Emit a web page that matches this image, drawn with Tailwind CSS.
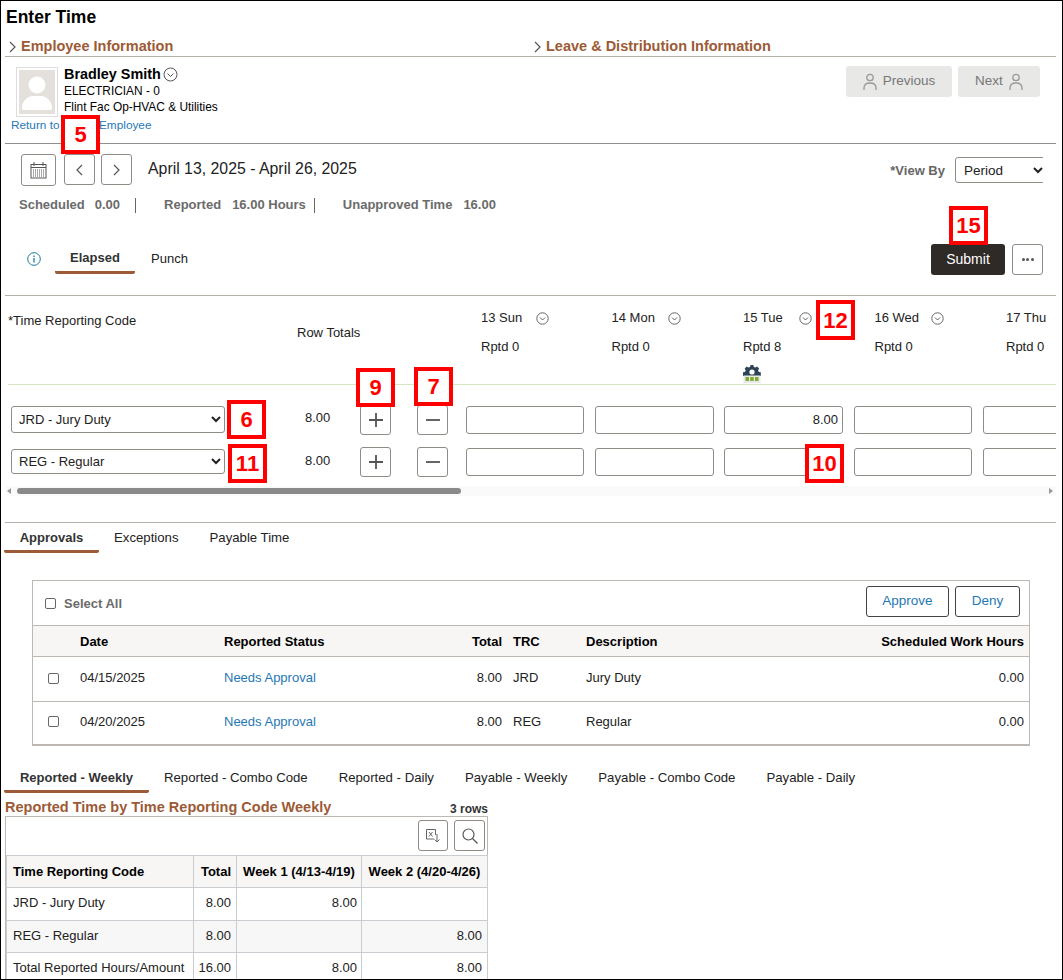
<!DOCTYPE html>
<html lang="en">

<head>
    <meta charset="UTF-8">
    <title>Enter Time</title>
    <script src="https://cdn.jsdelivr.net/npm/@tailwindcss/browser@4"></script>
</head>

<body class="bg-white">
    <div class="relative w-[1063px] h-[980px] overflow-hidden border border-black font-['Liberation_Sans',Arial,sans-serif] text-[13px] text-[#222]">
        <!-- Title -->
        <h1 class="h-[32px] pl-[5px] flex items-center text-[17.5px] font-bold text-black">Enter Time</h1>

        <!-- Collapsed sections -->
        <div class="ml-[4px] w-[1051px] h-[24px] pt-[5px] flex items-center border-b border-[#b5b1a9] text-[14.5px] font-bold text-[#9c5a36]">
            <div class="w-[525px] pl-[4px] flex items-center gap-[5px]">
                <svg class="w-[7px] h-[12px]" viewBox="0 0 7 12" fill="none" stroke="#555" stroke-width="1.2"><path d="M1 1l5 5-5 5" /></svg>
                <span>Employee Information</span>
            </div>
            <div class="pl-[4px] flex items-center gap-[5px]">
                <svg class="w-[7px] h-[12px]" viewBox="0 0 7 12" fill="none" stroke="#555" stroke-width="1.2"><path d="M1 1l5 5-5 5" /></svg>
                <span>Leave &amp; Distribution Information</span>
            </div>
        </div>

        <!-- Employee -->
        <div class="ml-[4px] w-[1051px] h-[87px] flex border-b border-[#8f8f8f]">
            <div class="w-[155px] h-full pl-[6px] pt-[10px]">
                <div class="ml-[5px] w-[42px] h-[50px] border border-[#ddd] p-[2px]">
                    <svg class="w-full h-full bg-[#e4e1dc]" viewBox="0 0 36 44" fill="#fff"><circle cx="18" cy="15" r="8.5" /><path d="M3 38c0-7 5-11 10-12h10c5 1 10 5 10 12 0 2-1 2-2 2H5c-1 0-2 0-2-2z" /></svg>
                </div>
                <a class="flex mt-[1px] text-[11.8px] leading-[14px] text-[#1f78b4] whitespace-nowrap"><span class="w-[88px]">Return to</span><span>Employee</span></a>
            </div>
            <div class="-ml-[96px] pt-[9px]">
                <div class="flex items-center gap-[2px] h-[17px] text-[14.4px] font-bold text-black">Bradley Smith
                    <svg class="w-[15px] h-[15px]" viewBox="0 0 15 15" fill="none" stroke="#555"><circle cx="7.5" cy="7.5" r="6.5" /><path d="M4.5 6.5l3 3 3-3" /></svg>
                </div>
                <div class="h-[16px] leading-[16px] text-[11.9px] text-black">ELECTRICIAN - 0</div>
                <div class="h-[16px] leading-[16px] text-[11.9px] text-black">Flint Fac Op-HVAC &amp; Utilities</div>
            </div>
            <div class="ml-auto mr-[16px] mt-[9px] flex gap-[6px] text-[13.5px] text-[#777]">
                <div class="w-[106px] h-[31px] rounded-[3px] bg-[#e8e8e6] flex items-center justify-center gap-[6px]">
                    <svg class="w-[14px] h-[18px]" viewBox="0 0 14 18" fill="none" stroke="#999" stroke-width="1.3"><circle cx="7" cy="4.5" r="3.2" /><path d="M1 17v-2c0-3 2-5 6-5s6 2 6 5v2" /></svg>
                    Previous
                </div>
                <div class="w-[82px] h-[31px] rounded-[3px] bg-[#e8e8e6] flex items-center justify-center gap-[6px]">
                    Next
                    <svg class="w-[14px] h-[18px]" viewBox="0 0 14 18" fill="none" stroke="#999" stroke-width="1.3"><circle cx="7" cy="4.5" r="3.2" /><path d="M1 17v-2c0-3 2-5 6-5s6 2 6 5v2" /></svg>
                </div>
            </div>
        </div>

        <!-- Period navigation -->
        <div class="h-[46px] pl-[20px] pt-[10px] flex items-start">
            <div class="w-[35px] h-[32px] border border-[#8f8b85] rounded-[3px] flex items-center justify-center">
                <svg class="w-[17px] h-[17px]" viewBox="0 0 17 17" fill="none" stroke="#555"><rect x="1" y="2.5" width="15" height="13.5" /><path d="M4 0v4M13 0v4M1 5.5h15" /><path d="M3 8h11M3 10h11M3 12h11M3 14h11" stroke-dasharray="1 1" /></svg>
            </div>
            <div class="ml-[8px] w-[31px] h-[31px] border border-[#8f8b85] rounded-[3px] flex items-center justify-center">
                <svg class="w-[7px] h-[12px]" viewBox="0 0 7 12" fill="none" stroke="#555" stroke-width="1.2"><path d="M6 1L1 6l5 5" /></svg>
            </div>
            <div class="ml-[6px] w-[31px] h-[31px] border border-[#8f8b85] rounded-[3px] flex items-center justify-center">
                <svg class="w-[7px] h-[12px]" viewBox="0 0 7 12" fill="none" stroke="#555" stroke-width="1.2"><path d="M1 1l5 5-5 5" /></svg>
            </div>
            <div class="ml-[16px] h-[30px] flex items-center text-[15.85px] text-[#222]">April 13, 2025 - April 26, 2025</div>
            <div class="ml-auto mr-[19px] mt-[3px] flex items-center gap-[10px]">
                <span class="text-[13px] font-bold text-[#666]">*View By</span>
                <div class="w-[88px] h-[27px] overflow-hidden">
                    <select class="w-[92px] h-[26px] pl-[4px] border border-[#8f8b85] rounded-[3px] bg-white text-[13.5px] text-[#222]"><option>Period</option></select>
                </div>
            </div>
        </div>

        <!-- Summary -->
        <div class="h-[28px] pt-[2px] pl-[18px] flex items-center text-[13px] font-bold text-[#6b6b6b]">
            <span>Scheduled</span>
            <span class="ml-[10px]">0.00</span>
            <span class="ml-[15px] h-[15px] border-r border-[#666]"></span>
            <span class="ml-[28px]">Reported</span>
            <span class="ml-[11px]">16.00 Hours</span>
            <span class="ml-[8px] h-[15px] border-r border-[#666]"></span>
            <span class="ml-[28px]">Unapproved Time</span>
            <span class="ml-[11px]">16.00</span>
        </div>

        <!-- Elapsed / Punch tabs -->
        <div class="ml-[4px] w-[1051px] h-[78px] border-b border-[#b5b1a9] relative">
            <div class="absolute left-[22px] top-[34px] w-[14px] h-[14px]">
                <svg class="w-[14px] h-[14px]" viewBox="0 0 14 14" fill="none" stroke="#1b7a9c"><circle cx="7" cy="7" r="6.3" /><path d="M7 6v4.5M7 3.5v1.4" stroke-width="1.3" /></svg>
            </div>
            <div class="absolute left-[50px] top-[27px] w-[80px] h-[29px] flex justify-center pt-[3px] border-b-[3px] border-[#9c5a36] text-[13px] font-bold text-[#333] rounded-b-[2px]">Elapsed</div>
            <div class="absolute left-[146px] top-[31px] text-[13px] text-[#222]">Punch</div>
            <div class="absolute left-[926px] top-[26px] w-[74px] h-[31px] rounded-[3px] bg-[#2e2a27] flex items-center justify-center text-[14px] text-white">Submit</div>
            <div class="absolute left-[1007px] top-[26px] w-[31px] h-[31px] rounded-[3px] border border-[#8f8b85] flex items-center justify-center gap-[1.5px]">
                <span class="w-[3px] h-[3px] rounded-full bg-[#555]"></span><span class="w-[3px] h-[3px] rounded-full bg-[#555]"></span><span class="w-[3px] h-[3px] rounded-full bg-[#555]"></span>
            </div>
        </div>

        <!-- Time grid header -->
        <div class="ml-[7px] w-[1048px] h-[89px] border-b border-[#d3e8c0] relative">
            <div class="absolute left-0 top-[15px] text-[13px]">*Time Reporting Code</div>
            <div class="absolute left-[289px] top-[27px] text-[13px]">Row Totals</div>
            <div class="absolute left-[472px] top-[14px] w-[600px] flex text-[13px]">
                <div class="w-[131.5px] pl-[1px] shrink-0">
                    <div class="h-[16px] flex items-center leading-[16px]"><span class="w-[55px]">13 Sun</span><svg class="w-[13px] h-[13px]" viewBox="0 0 13 13" fill="none" stroke="#666"><circle cx="6.5" cy="6.5" r="5.7" /><path d="M4 5.5l2.5 2.5L9 5.5" /></svg></div>
                    <div class="mt-[13px] leading-[16px]">Rptd 0</div>
                </div>
                <div class="w-[131.5px] shrink-0">
                    <div class="h-[16px] flex items-center leading-[16px]"><span class="w-[56px]">14 Mon</span><svg class="w-[13px] h-[13px]" viewBox="0 0 13 13" fill="none" stroke="#666"><circle cx="6.5" cy="6.5" r="5.7" /><path d="M4 5.5l2.5 2.5L9 5.5" /></svg></div>
                    <div class="mt-[13px] leading-[16px]">Rptd 0</div>
                </div>
                <div class="w-[131.5px] shrink-0">
                    <div class="h-[16px] flex items-center leading-[16px]"><span class="w-[56px]">15 Tue</span><svg class="w-[13px] h-[13px]" viewBox="0 0 13 13" fill="none" stroke="#666"><circle cx="6.5" cy="6.5" r="5.7" /><path d="M4 5.5l2.5 2.5L9 5.5" /></svg></div>
                    <div class="mt-[13px] leading-[16px]">Rptd 8</div>
                    <svg class="mt-[10px] w-[18px] h-[18px]" viewBox="0 0 18 18"><path fill="#2f4358" d="M7.6 0h2.8l.4 1.9 1.7.7 1.6-1 2 2-1 1.6.7 1.7 2 .4V11H0V7.3l2-.4.7-1.7-1-1.6 2-2 1.6 1 1.7-.7z" /><circle cx="9" cy="7" r="2.6" fill="#fff" /><rect x="0.5" y="10.5" width="17" height="7.5" fill="#e9e9e9" /><rect x="2.5" y="12" width="3.5" height="4" fill="#7cae2c" /><rect x="7.2" y="12" width="3.5" height="4" fill="#7cae2c" /><rect x="12" y="12" width="3.5" height="4" fill="#7cae2c" /></svg>
                </div>
                <div class="w-[131.5px] shrink-0">
                    <div class="h-[16px] flex items-center leading-[16px]"><span class="w-[56px]">16 Wed</span><svg class="w-[13px] h-[13px]" viewBox="0 0 13 13" fill="none" stroke="#666"><circle cx="6.5" cy="6.5" r="5.7" /><path d="M4 5.5l2.5 2.5L9 5.5" /></svg></div>
                    <div class="mt-[13px] leading-[16px]">Rptd 0</div>
                </div>
                <div class="w-[131.5px] shrink-0">
                    <div class="h-[16px] leading-[16px]">17 Thu</div>
                    <div class="mt-[13px] leading-[16px]">Rptd 0</div>
                </div>
            </div>
        </div>

        <!-- Time grid rows -->
        <div class="w-[1055px] h-[101px] pt-[20px] overflow-hidden">
            <div class="pl-[10px] h-[42px] w-[1200px] flex items-start">
                <select class="w-[214px] h-[27px] mt-[1px] pl-[3px] border border-[#8f8b85] rounded-[3px] bg-white text-[13px] text-[#222]"><option>JRD - Jury Duty</option></select>
                <span class="ml-[80px] w-[26px] leading-[26px] text-[13px]">8.00</span>
                <div class="ml-[29px] w-[31px] h-[30px] border border-[#8f8b85] rounded-[3px] flex items-center justify-center"><svg class="w-[14px] h-[14px]" viewBox="0 0 14 14" stroke="#555" stroke-width="1.8"><path d="M7 0v14M0 7h14" /></svg></div>
                <div class="ml-[26px] w-[31px] h-[30px] border border-[#8f8b85] rounded-[3px] flex items-center justify-center"><svg class="w-[14px] h-[14px]" viewBox="0 0 14 14" stroke="#555" stroke-width="1.8"><path d="M0 7h14" /></svg></div>
                <div class="ml-[18px] mt-[1px] w-[118px] h-[28px] border border-[#8f8b85] rounded-[3px]"></div>
                <div class="ml-[11px] mt-[1px] w-[119px] h-[28px] border border-[#8f8b85] rounded-[3px]"></div>
                <div class="ml-[10px] mt-[1px] w-[119px] h-[28px] border border-[#8f8b85] rounded-[3px] flex items-center justify-end pr-[4px] text-[13px]">8.00</div>
                <div class="ml-[11px] mt-[1px] w-[118px] h-[28px] border border-[#8f8b85] rounded-[3px]"></div>
                <div class="ml-[11px] mt-[1px] w-[119px] h-[28px] border border-[#8f8b85] rounded-[3px]"></div>
            </div>
            <div class="pl-[10px] h-[39px] w-[1200px] flex items-start">
                <select class="w-[214px] h-[25px] mt-[2px] pl-[3px] border border-[#8f8b85] rounded-[3px] bg-white text-[13px] text-[#222]"><option>REG - Regular</option></select>
                <span class="ml-[80px] w-[26px] leading-[27px] text-[13px]">8.00</span>
                <div class="ml-[29px] w-[31px] h-[30px] border border-[#8f8b85] rounded-[3px] flex items-center justify-center"><svg class="w-[14px] h-[14px]" viewBox="0 0 14 14" stroke="#555" stroke-width="1.8"><path d="M7 0v14M0 7h14" /></svg></div>
                <div class="ml-[26px] w-[31px] h-[30px] border border-[#8f8b85] rounded-[3px] flex items-center justify-center"><svg class="w-[14px] h-[14px]" viewBox="0 0 14 14" stroke="#555" stroke-width="1.8"><path d="M0 7h14" /></svg></div>
                <div class="ml-[18px] mt-[1px] w-[118px] h-[28px] border border-[#8f8b85] rounded-[3px]"></div>
                <div class="ml-[11px] mt-[1px] w-[119px] h-[28px] border border-[#8f8b85] rounded-[3px]"></div>
                <div class="ml-[10px] mt-[1px] w-[119px] h-[28px] border border-[#8f8b85] rounded-[3px]"></div>
                <div class="ml-[11px] mt-[1px] w-[118px] h-[28px] border border-[#8f8b85] rounded-[3px]"></div>
                <div class="ml-[11px] mt-[1px] w-[119px] h-[28px] border border-[#8f8b85] rounded-[3px]"></div>
            </div>
        </div>

        <!-- Scrollbar -->
        <div class="ml-[5px] w-[1050px] h-[10px] bg-[#fafafa] flex items-center pl-[1px] pr-[3px]">
            <span class="w-0 h-0 border-y-[3px] border-y-transparent border-r-[4px] border-r-[#999]"></span>
            <span class="ml-[6px] w-[444px] h-[6px] rounded-[3px] bg-[#8a8a8a]"></span>
            <span class="ml-auto w-0 h-0 border-y-[3px] border-y-transparent border-l-[4px] border-l-[#999]"></span>
        </div>

        <!-- Approvals tabs -->
        <div class="mt-[26px] ml-[4px] w-[1051px] h-[31px] border-t border-[#b5b1a9] flex items-start text-[13.2px]">
            <div class="-ml-[1px] w-[95px] h-[30px] pt-[5px] text-center border-b-[3px] border-[#9c5a36] font-bold text-[13px] text-[#333] rounded-b-[2px]">Approvals</div>
            <div class="ml-[15px] pt-[5px]">Exceptions</div>
            <div class="ml-[31px] pt-[5px]">Payable Time</div>
        </div>

        <!-- Approvals table -->
        <div class="mt-[27px] ml-[31px] w-[998px] h-[166px] border border-b-2 border-[#bdb9b2]">
            <div class="h-[45px] border-b border-[#bdb9b2] flex items-center pl-[12px] pr-[9px]">
                <span class="w-[11px] h-[11px] border border-[#666] rounded-[2px]"></span>
                <span class="ml-[8px] mt-[2px] text-[13px] font-bold text-[#6b6b6b]">Select All</span>
                <div class="ml-auto -mt-[3px] w-[83px] h-[31px] border border-[#444] rounded-[3px] flex items-center justify-center text-[#1f78b4] text-[13.5px]">Approve</div>
                <div class="ml-[6px] -mt-[3px] w-[65px] h-[31px] border border-[#444] rounded-[3px] flex items-center justify-center text-[#1f78b4] text-[13.5px]">Deny</div>
            </div>
            <table class="w-full table-fixed border-collapse text-[13px]">
                <colgroup><col class="w-[47px]"><col class="w-[144px]"><col class="w-[140px]"><col class="w-[138px]"><col class="w-[84px]"><col class="w-[160px]"><col></colgroup>
                <thead>
                    <tr class="h-[30px] bg-[#f7f6f4] font-bold text-black border-b border-[#bdb9b2]">
                        <th></th>
                        <th class="pt-[2px] text-left">Date</th>
                        <th class="pt-[2px] text-left">Reported Status</th>
                        <th class="pt-[2px] text-right">Total</th>
                        <th class="pt-[2px] text-left pl-[11px]">TRC</th>
                        <th class="pt-[2px] text-left">Description</th>
                        <th class="pt-[2px] text-right pr-[5px]">Scheduled Work Hours</th>
                    </tr>
                </thead>
                <tbody>
                    <tr class="h-[45px] border-b border-[#bdb9b2]">
                        <td class="pl-[15px] pb-[1px]"><span class="block w-[11px] h-[11px] border border-[#666] rounded-[2px]"></span></td>
                        <td class="pb-[1px]">04/15/2025</td>
                        <td class="pb-[1px] text-[#1f78b4]">Needs Approval</td>
                        <td class="pb-[1px] text-right">8.00</td>
                        <td class="pb-[1px] pl-[11px]">JRD</td>
                        <td class="pb-[1px]">Jury Duty</td>
                        <td class="pb-[1px] text-right pr-[5px]">0.00</td>
                    </tr>
                    <tr class="h-[43px]">
                        <td class="pl-[15px] pb-[3px]"><span class="block w-[11px] h-[11px] border border-[#666] rounded-[2px]"></span></td>
                        <td class="pb-[3px]">04/20/2025</td>
                        <td class="pb-[3px] text-[#1f78b4]">Needs Approval</td>
                        <td class="pb-[3px] text-right">8.00</td>
                        <td class="pb-[3px] pl-[11px]">REG</td>
                        <td class="pb-[3px]">Regular</td>
                        <td class="pb-[3px] text-right pr-[5px]">0.00</td>
                    </tr>
                </tbody>
            </table>
        </div>

        <!-- Summary tabs -->
        <div class="mt-[22px] ml-[3px] h-[25px] flex items-start text-[13.2px]">
            <div class="w-[145px] h-[25px] text-center border-b-[3px] border-[#9c5a36] font-bold text-[13px] text-[#333] rounded-b-[2px]">Reported - Weekly</div>
            <div class="ml-[15px]">Reported - Combo Code</div>
            <div class="ml-[31px]">Reported - Daily</div>
            <div class="ml-[31px]">Payable - Weekly</div>
            <div class="ml-[31px]">Payable - Combo Code</div>
            <div class="ml-[31px]">Payable - Daily</div>
        </div>

        <!-- Weekly table -->
        <div class="ml-[4px] w-[483px] h-[23px] pt-[6px] flex items-center justify-between text-[#9c5a36]">
            <span class="text-[14.5px] font-bold">Reported Time by Time Reporting Code Weekly</span>
            <span class="mt-[3px] text-[12px] font-bold text-[#333]">3 rows</span>
        </div>
        <div class="ml-[4px] w-[483px] h-[170px] border border-[#bdb9b2]">
            <div class="h-[38px] flex items-start justify-end gap-[6px] pt-[3px] pr-[2px]">
                <div class="w-[30px] h-[31px] border border-[#8f8b85] rounded-[3px] flex items-center justify-center">
                    <svg class="w-[16px] h-[16px]" viewBox="0 0 16 16" fill="none" stroke="#666"><path d="M9 11H1.5V1.5h9V7" /><path d="M4 4l3.5 4.5M7.5 4L4 8.5" /><path d="M12 6v8M9.5 11.5L12 14l2.5-2.5" /></svg>
                </div>
                <div class="w-[31px] h-[31px] border border-[#8f8b85] rounded-[3px] flex items-center justify-center">
                    <svg class="w-[16px] h-[16px]" viewBox="0 0 16 16" fill="none" stroke="#555" stroke-width="1.2"><circle cx="6.5" cy="6.5" r="5.5" /><path d="M10.5 10.5l5 5" /></svg>
                </div>
            </div>
            <table class="w-[481px] table-fixed border-collapse text-[13px]">
                <colgroup><col class="w-[187px]"><col class="w-[43px]"><col class="w-[125px]"><col class="w-[126px]"></colgroup>
                <thead>
                    <tr class="h-[32px] bg-[#f7f6f4] font-bold text-black">
                        <th class="text-left pl-[6px] border border-[#c9cdd2]">Time Reporting Code</th>
                        <th class="text-right pr-[5px] border border-[#c9cdd2]">Total</th>
                        <th class="text-center border border-[#c9cdd2] whitespace-nowrap">Week 1 (4/13-4/19)</th>
                        <th class="text-center border border-[#c9cdd2] whitespace-nowrap">Week 2 (4/20-4/26)</th>
                    </tr>
                </thead>
                <tbody>
                    <tr class="h-[33px]">
                        <td class="pl-[6px] pb-[2px] border border-[#c9cdd2]">JRD - Jury Duty</td>
                        <td class="text-right pr-[5px] pb-[2px] border border-[#c9cdd2]">8.00</td>
                        <td class="text-right pr-[4px] pb-[2px] border border-[#c9cdd2]">8.00</td>
                        <td class="border border-[#c9cdd2]"></td>
                    </tr>
                    <tr class="h-[32px] bg-[#f7f7f7]">
                        <td class="pl-[6px] pb-[2px] border border-[#c9cdd2]">REG - Regular</td>
                        <td class="text-right pr-[5px] pb-[2px] border border-[#c9cdd2]">8.00</td>
                        <td class="border border-[#c9cdd2]"></td>
                        <td class="text-right pr-[5px] pb-[2px] border border-[#c9cdd2]">8.00</td>
                    </tr>
                    <tr class="h-[32px]">
                        <td class="pl-[6px] pb-[2px] border border-[#c9cdd2] whitespace-nowrap">Total Reported Hours/Amount</td>
                        <td class="text-right pr-[5px] pb-[2px] border border-[#c9cdd2]">16.00</td>
                        <td class="text-right pr-[4px] pb-[2px] border border-[#c9cdd2]">8.00</td>
                        <td class="text-right pr-[5px] pb-[2px] border border-[#c9cdd2]">8.00</td>
                    </tr>
                </tbody>
            </table>
        </div>

        <!-- Callout numbers over the screenshot -->
        <div class="absolute left-[60px] top-[114px] w-[39px] h-[39px] border-4 border-[#f00] bg-white flex items-center justify-center text-[22px] font-bold text-[#f00]">5</div>
        <div class="absolute left-[948px] top-[205px] w-[39px] h-[39px] border-4 border-[#f00] bg-white flex items-center justify-center text-[22px] font-bold text-[#f00]">15</div>
        <div class="absolute left-[815px] top-[299px] w-[39px] h-[40px] border-4 border-[#f00] bg-white flex items-center justify-center text-[22px] font-bold text-[#f00]">12</div>
        <div class="absolute left-[355px] top-[367px] w-[39px] h-[39px] border-4 border-[#f00] bg-white flex items-center justify-center text-[22px] font-bold text-[#f00]">9</div>
        <div class="absolute left-[413px] top-[366px] w-[39px] h-[39px] border-4 border-[#f00] bg-white flex items-center justify-center text-[22px] font-bold text-[#f00]">7</div>
        <div class="absolute left-[226px] top-[399px] w-[39px] h-[39px] border-4 border-[#f00] bg-white flex items-center justify-center text-[22px] font-bold text-[#f00]">6</div>
        <div class="absolute left-[227px] top-[443px] w-[39px] h-[39px] border-4 border-[#f00] bg-white flex items-center justify-center text-[22px] font-bold text-[#f00]">11</div>
        <div class="absolute left-[804px] top-[443px] w-[39px] h-[39px] border-4 border-[#f00] bg-white flex items-center justify-center text-[22px] font-bold text-[#f00]">10</div>
    </div>
</body>

</html>
